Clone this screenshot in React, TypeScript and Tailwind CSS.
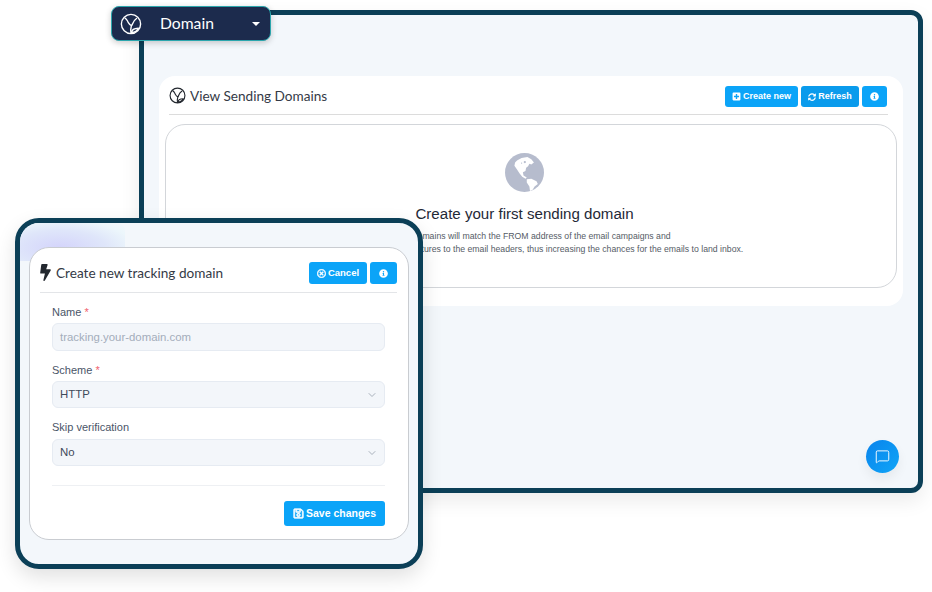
import { MessageSquare, ChevronDown } from "lucide-react";
import {
  FaBolt,
  FaInfoCircle,
  FaPlusSquare,
  FaRegSave,
  FaRegTimesCircle,
  FaSyncAlt,
} from "react-icons/fa";

const lato = "font-['Lato',sans-serif]";
const arial = "font-['Liberation_Sans',Arial,sans-serif]";

function DomainIcon({ size, stroke = 1.6 }: { size: number; stroke?: number }) {
  return (
    <svg width={size} height={size} viewBox="0 0 24 24" fill="none" stroke="currentColor" strokeWidth={stroke} strokeLinecap="round" strokeLinejoin="round">
      <circle cx="12" cy="12" r="10.5" />
      <path d="M5.500 5.500c2 .8 2.400 3 3.600 5 1 1.700 2.400 3 3.400 3.300 1.600-1.200 1-4.800 5.500-7.800" />
      <path d="M12.500 13.800c-.5 2.500-1.500 4.700-.5 8" />
      <path d="M12.500 21.500c.2-2.800 2.800-4.800 7.500-4.900-.9 2.400-3.600 4.300-7.500 4.900z" />
    </svg>
  );
}

function GlobeIcon() {
  return (
    <svg width="39" height="39" viewBox="15 15 120 120">
      <circle cx="75" cy="75" r="60" fill="#b6bccd" />
      <path d="M52 38 66 30 84 27 96 34 104 44 96 50 90 48 86 56 80 60 78 70 70 74 72 84 82 90 78 94 68 88 60 78 52 66 44 54 46 44Z" fill="#fff" />
      <path d="M82 96 96 94 112 102 116 110 106 118 100 128 92 132 90 118 82 106Z" fill="#fff" />
      <circle cx="76" cy="43" r="3.500" fill="#b6bccd" />
      <circle cx="66" cy="46" r="2" fill="#b6bccd" />
    </svg>
  );
}

function Btn({ children, className = "" }: { children: React.ReactNode; className?: string }) {
  return (
    <button className={`flex items-center justify-center gap-[2px] rounded-[3px] bg-[#0ba4f8] text-white font-bold ${arial} ${className}`}>
      {children}
    </button>
  );
}

function Field({ label, required, value, select, placeholder, gap = "gap-[4px]" }: { label: string; required?: boolean; value: string; select?: boolean; placeholder?: boolean; gap?: string }) {
  return (
    <div className={`flex flex-col ${gap}`}>
      <div className={`text-[11px] leading-[14px] text-[#4a5568] ${arial}`}>
        {label}
        {required && <span className="text-[#f0616d]"> *</span>}
      </div>
      <div className={`flex items-center justify-between ${select ? "h-[27px]" : "h-[28px]"} pl-[7px] pr-1.5 rounded-md border border-[#e6ebf2] bg-[#f3f6fa] text-[11.4px] ${arial} ${placeholder ? "text-[#a3adba] pt-[1px]" : "text-[#3f4a5a]"}`}>
        <span>{value}</span>
        {select && <ChevronDown size={12} className="text-[#a9b1bc]" />}
      </div>
    </div>
  );
}

export default function App() {
  return (
    <div className="relative w-[932px] h-[592px] bg-white overflow-hidden">
      {/* back window */}
      <div className="absolute left-[139px] top-[10px] w-[784px] h-[483px] rounded-[12px] border-[5px] border-[#0b3f57] bg-[#f3f7fb] pt-[61px] pl-[15px] pr-[15px] shadow-[0_8px_20px_rgba(0,0,0,0.08)]">
        <div className="h-[230px] rounded-[16px] bg-white px-[6px]">
          <div className="ml-[4px] mr-[9px] h-[39px] flex items-center justify-between border-b border-[#dcdcdc] pt-[2px] pr-[1px]">
            <div className={`flex items-center gap-[4px] text-[13.6px] text-[#343a46] ${lato}`}>
              <span className="text-[#23282f]"><DomainIcon size={17} /></span>
              View Sending Domains
            </div>
            <div className="flex gap-[3px]">
              <Btn className="w-[73px] h-[21px] pt-[1px] text-[9px]"><FaPlusSquare size={9} />Create new</Btn>
              <Btn className="w-[58px] h-[21px] pt-[1px] text-[9px] !bg-[#0a9bec]"><FaSyncAlt size={8} />Refresh</Btn>
              <Btn className="w-[25px] h-[21px] pt-[1px] text-[9px]"><FaInfoCircle size={9} /></Btn>
            </div>
          </div>
          <div className="mt-[9px] h-[164px] rounded-[20px] border border-[#d3d6da] flex flex-col items-center pt-[28px] pr-[13px]">
            <GlobeIcon />
            <div className={`mt-[12px] text-[15.1px] leading-[20px] text-[#1f2937] ${arial}`}>Create your first sending domain</div>
            <div className={`mt-[6px] text-[8.7px] leading-[13px] text-[#555c66] text-center ${arial}`}>
              <div>Sending domains will match the FROM address of the email campaigns and</div>
              <div>it will also add the DKIM signatures to the email headers, thus increasing the chances for the emails to land inbox.</div>
            </div>
          </div>
        </div>
      </div>

      {/* chat bubble */}
      <div className="absolute left-[866px] top-[440px] w-[33px] h-[33px] rounded-full bg-gradient-to-br from-[#0b84ec] to-[#12a5f7] flex items-center justify-center text-white shadow-[0_6px_12px_rgba(0,0,0,0.06)]">
        <MessageSquare size={15} strokeWidth={1.5} />
      </div>

      {/* dropdown pill */}
      <div className={`absolute left-[111px] top-[6px] w-[160px] h-[35px] rounded-[8px] border border-[#2ba6ad] bg-[#1c2b4d] text-white flex items-center pl-[8px] pr-[10px] shadow-[0_2px_6px_rgba(0,0,0,0.2)] ${lato}`}>
        <DomainIcon size={22} stroke={1.5} />
        <span className="ml-[18px] text-[15.7px]">Domain</span>
        <span className="ml-auto w-0 h-0 border-x-[4px] border-x-transparent border-t-[4px] border-t-white" />
      </div>

      {/* front window */}
      <div className="absolute left-[15px] top-[218px] w-[408px] h-[351px] rounded-[24px] border-[5px] border-[#0b3f57] bg-[#f3f7fb] pt-[24px] px-[9px] overflow-hidden shadow-[0_8px_20px_rgba(0,0,0,0.12)]">
        <div className="absolute left-0 top-0 w-[105px] h-[38px] rounded-r-[8px] bg-[radial-gradient(ellipse_at_38%_65%,#d4d4fb_0%,#dfe6fa_50%,#ecf6fb_80%,#f3f7fb_100%)]" />
        <div className="relative h-[293px] rounded-[20px] border border-[#c9ccd1] bg-white pl-[10px] pr-[11px]">
          <div className="h-[45px] flex items-center justify-between border-b border-[#e3e5e8] pt-[6px]">
            <div className={`flex items-center gap-[2px] -ml-[3px] text-[13.6px] text-[#343a46] ${lato}`}>
              <FaBolt size={17} className="text-[#23282f]" />
              Create new tracking domain
            </div>
            <div className="flex gap-[3px]">
              <Btn className="w-[58px] h-[22px] text-[9.5px]"><FaRegTimesCircle size={9} stroke="currentColor" strokeWidth={30} />Cancel</Btn>
              <Btn className="w-[27px] h-[22px] text-[9.5px]"><FaInfoCircle size={9} /></Btn>
            </div>
          </div>
          <div className="pt-[12px] pl-[12px] pr-[12px] flex flex-col gap-[12px]">
            <Field label="Name" required value="tracking.your-domain.com" placeholder />
            <Field label="Scheme" required value="HTTP" select />
            <Field label="Skip verification" value="No" select gap="gap-[5px]" />
          </div>
          <div className="mx-[12px] mt-[19px] pt-[15px] border-t border-[#eef0f3] flex justify-end">
            <Btn className="w-[101px] h-[25px] text-[10.5px]"><FaRegSave size={11} stroke="currentColor" strokeWidth={30} />Save changes</Btn>
          </div>
        </div>
      </div>
    </div>
  );
}
